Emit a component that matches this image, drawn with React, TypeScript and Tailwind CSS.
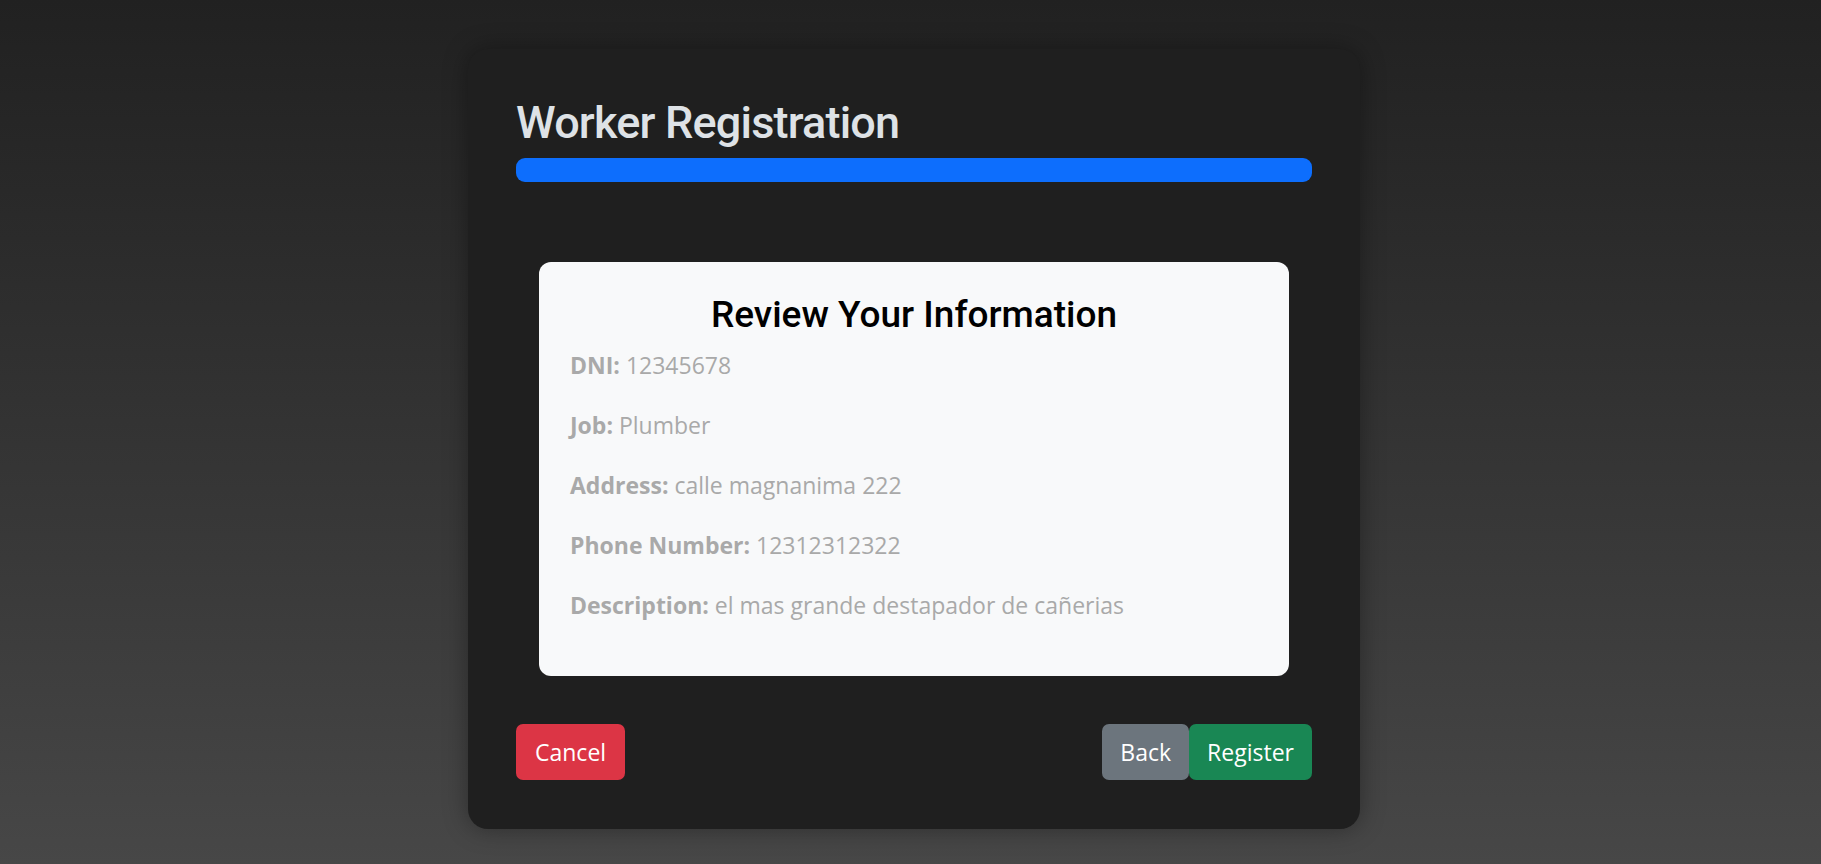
const fields = [
  { label: 'DNI:', value: '12345678' },
  { label: 'Job:', value: 'Plumber' },
  { label: 'Address:', value: 'calle magnanima 222' },
  { label: 'Phone Number:', value: '12312312322' },
  { label: 'Description:', value: 'el mas grande destapador de cañerias' },
];

const headingFont = { fontFamily: 'Roboto, "Open Sans", sans-serif' };

export default function App() {
  return (
    <div
      className="min-h-screen w-full bg-gradient-to-b from-[#212121] to-[#474747] flex justify-center pt-[49px] pb-[35px] pl-[7px]"
      style={{ fontFamily: '"Open Sans", "Noto Sans", sans-serif' }}
    >
      <div className="w-[892px] bg-[#1f1f1f] rounded-[20px] shadow-[0_0_24px_rgba(0,0,0,0.35)] px-[48px] pt-[46px] pb-[48px] flex flex-col">
        <h1
          className="text-[45px] leading-[55px] font-medium tracking-[-0.8px] text-[#dee2e6] mb-[8px]"
          style={headingFont}
        >
          Worker Registration
        </h1>
        <div className="h-[24px] w-full bg-[#0d6efd] rounded-[9px]" />

        <div className="mt-[80px] mx-[23px] bg-[#f8f9fa] rounded-[12px] px-[31px] pt-[31px] pb-[53px]">
          <h2
            className="text-[37px] leading-[44px] font-medium text-black text-center mb-[11px]"
            style={headingFont}
          >
            Review Your Information
          </h2>
          <div className="flex flex-col gap-[25px] text-[23px] leading-[35px] text-[#a9a9a9]">
            {fields.map((f) => (
              <p key={f.label}>
                <span className="font-bold">{f.label}</span> {f.value}
              </p>
            ))}
          </div>
        </div>

        <div className="mt-[48px] flex items-center justify-between">
          <button className="h-[56px] px-[19px] rounded-[7px] bg-[#dc3545] text-white text-[23px] leading-[36px]">
            Cancel
          </button>
          <div className="flex">
            <button className="h-[56px] px-[18px] rounded-[7px] bg-[#6c757d] text-white text-[23px] leading-[36px]">
              Back
            </button>
            <button className="h-[56px] px-[18px] rounded-[7px] bg-[#198754] text-white text-[23px] leading-[36px]">
              Register
            </button>
          </div>
        </div>
      </div>
    </div>
  );
}
